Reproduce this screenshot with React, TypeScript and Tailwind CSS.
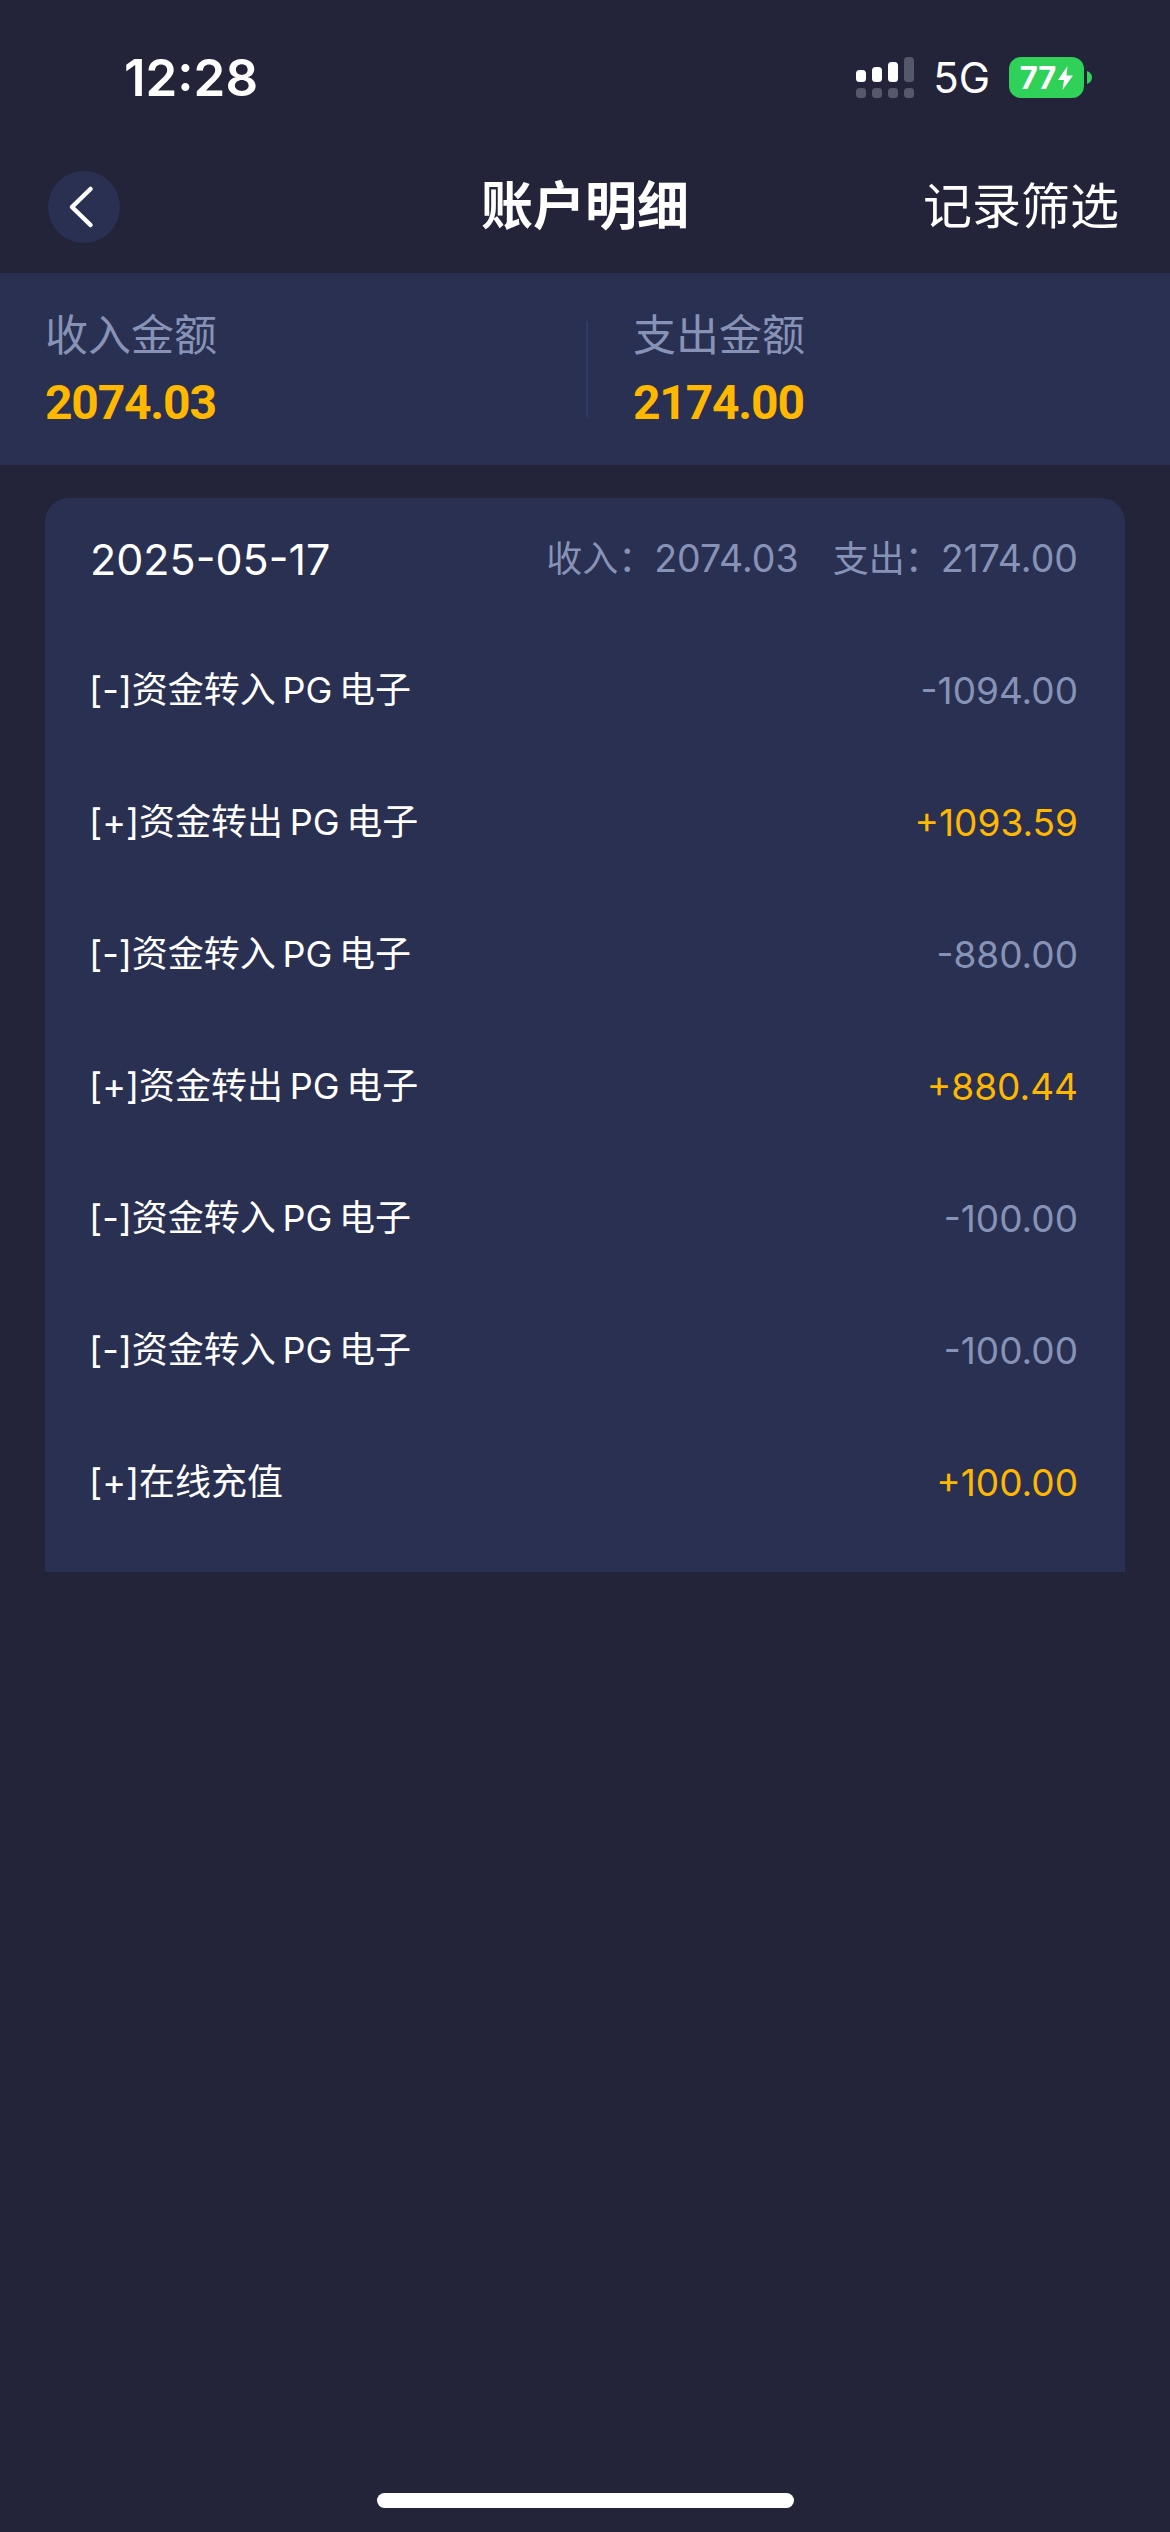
const fontStack = "font-['Inter','Noto_Sans_CJK_SC',sans-serif]";

interface Row {
  label: string;
  amount: string;
  income: boolean;
}

const rows: Row[] = [
  { label: "[-]资金转入 PG 电子", amount: "-1094.00", income: false },
  { label: "[+]资金转出 PG 电子", amount: "+1093.59", income: true },
  { label: "[-]资金转入 PG 电子", amount: "-880.00", income: false },
  { label: "[+]资金转出 PG 电子", amount: "+880.44", income: true },
  { label: "[-]资金转入 PG 电子", amount: "-100.00", income: false },
  { label: "[-]资金转入 PG 电子", amount: "-100.00", income: false },
  { label: "[+]在线充值", amount: "+100.00", income: true },
];

function SignalIcon() {
  return (
    <svg width="58" height="41" viewBox="0 0 58 41" fill="none">
      <rect x="0" y="13" width="10" height="12" rx="3.5" fill="#fff" />
      <rect x="16" y="10" width="10" height="15" rx="3.5" fill="#fff" />
      <rect x="32" y="5" width="10" height="20" rx="3.5" fill="#fff" />
      <rect x="48" y="0" width="10" height="25" rx="3.5" fill="#55576b" />
      <rect x="0" y="31" width="10" height="10" rx="3.5" fill="#55576b" />
      <rect x="16" y="31" width="10" height="10" rx="3.5" fill="#55576b" />
      <rect x="32" y="31" width="10" height="10" rx="3.5" fill="#55576b" />
      <rect x="48" y="31" width="10" height="10" rx="3.5" fill="#55576b" />
    </svg>
  );
}

function Battery() {
  return (
    <div className="flex items-center gap-[3px]">
      <div className="flex h-[41px] w-[75px] items-center justify-center gap-[2px] rounded-[12px] bg-[#30d158]">
        <span className="text-[31px] leading-none font-bold text-white">77</span>
        <svg width="15" height="24" viewBox="0 0 15 24">
          <path d="M9.5 0 L0 14 H6 L4.5 24 L15 9.5 H8.5 Z" fill="#fff" />
        </svg>
      </div>
      <svg width="5" height="13" viewBox="0 0 5 13">
        <path d="M0 0 C3 1 5 3.5 5 6.5 C5 9.5 3 12 0 13 Z" fill="#30d158" />
      </svg>
    </div>
  );
}

export default function App() {
  return (
    <div className={`flex h-[2532px] w-[1170px] flex-col bg-[#23243a] text-white ${fontStack}`}>
      <div className="flex h-[140px] items-center justify-between pt-[15px] pr-[78px] pl-[124px]">
        <span className="text-[51px] leading-none font-semibold">12:28</span>
        <div className="flex items-center">
          <SignalIcon />
          <span className="mr-[19px] ml-[19px] text-[42px] leading-none">5G</span>
          <Battery />
        </div>
      </div>

      <div className="relative flex h-[133px] items-center justify-between pr-[51px] pl-[48px]">
        <div className="flex h-[72px] w-[72px] items-center justify-center rounded-full bg-[#2a3052]">
          <svg className="mr-[6px]" width="26" height="44" viewBox="0 0 26 44" fill="none">
            <path d="M22.5 4 L4 22 L22.5 40" stroke="#fff" strokeWidth="4.5" strokeLinecap="round" strokeLinejoin="round" />
          </svg>
        </div>
        <span className="absolute left-0 w-full text-center text-[52px] leading-none font-semibold">账户明细</span>
        <span className="text-[49px] leading-none">记录筛选</span>
      </div>

      <div className="flex h-[192px] items-center bg-[#2a3052]">
        <div className="flex w-[586px] flex-col gap-[24px] pl-[45px]">
          <span className="text-[43px] leading-[44px] text-[#8793b6]">收入金额</span>
          <span className="font-['Roboto',sans-serif] text-[48px] leading-[44px] font-bold tracking-[-1.2px] text-[#ffb800]">2074.03</span>
        </div>
        <div className="h-[96px] w-[2px] bg-[#313b68]" />
        <div className="flex flex-col gap-[24px] pl-[45px]">
          <span className="text-[43px] leading-[44px] text-[#8793b6]">支出金额</span>
          <span className="font-['Roboto',sans-serif] text-[48px] leading-[44px] font-bold tracking-[-1.2px] text-[#ffb800]">2174.00</span>
        </div>
      </div>

      <div className="mx-[45px] mt-[33px] rounded-t-[24px] bg-[#2a3052] pb-[24px]">
        <div className="flex h-[122px] items-center justify-between pr-[47px] pl-[45px]">
          <span className="text-[43px] leading-none">2025-05-17</span>
          <div className="flex gap-[34px] text-[36px] leading-none text-[#8793b6]">
            <span>
              收入：<span className="text-[37.5px]">2074.03</span>
            </span>
            <span>
              支出：<span className="text-[37.5px]">2174.00</span>
            </span>
          </div>
        </div>
        <div className="mt-[4px]">
          {rows.map((row, i) => (
            <div key={i} className="flex h-[132px] items-center justify-between pr-[47px] pl-[44px]">
              <span className="text-[36px] leading-none [word-spacing:-3.5px]">{row.label}</span>
              <span className={`text-[37px] leading-none ${row.income ? "text-[#ffb800]" : "text-[#8793b6]"}`}>
                {row.amount}
              </span>
            </div>
          ))}
        </div>
      </div>

      <div className="mt-auto mb-[24px] flex justify-center">
        <div className="h-[15px] w-[417px] rounded-[8px] bg-white" />
      </div>
    </div>
  );
}
